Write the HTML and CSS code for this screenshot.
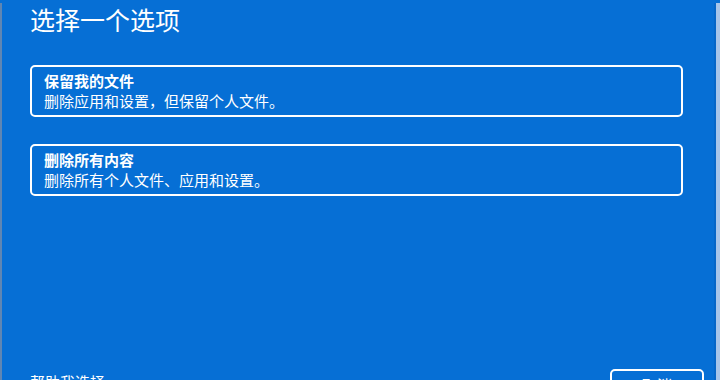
FILE: index.html
```html
<!DOCTYPE html>
<html lang="zh-CN">
<head>
  <meta charset="UTF-8">
  <meta name="viewport" content="width=device-width, initial-scale=1.0">
  <title>选择一个选项</title>
  <link rel="stylesheet" href="styles.css">
</head>
<body>
  <div class="screen">
    <div class="content">
      <h1 class="title">选择一个选项</h1>

      <div class="options">
        <button class="option">
          <span class="option-name">保留我的文件</span>
          <span class="option-desc">删除应用和设置，但保留个人文件。</span>
        </button>
        <button class="option">
          <span class="option-name">删除所有内容</span>
          <span class="option-desc">删除所有个人文件、应用和设置。</span>
        </button>
      </div>
    </div>

    <div class="footer">
      <a href="#" class="help">帮助我选择</a>
      <button class="cancel">取消</button>
    </div>
  </div>
</body>
</html>
```

FILE: styles.css
```css
html, body {
  margin: 0;
  height: 100%;
}
body {
  background-color: #066fd5;
  color: #fff;
  font-family: "Noto Sans CJK SC", "Noto Sans", sans-serif;
  overflow: hidden;
}
.screen {
  box-sizing: border-box;
  height: 100%;
  padding-left: 28px;
  border-left: 2px solid #5f86b3;
  border-right: 4px solid #a7c5ea;
  box-shadow: inset -2px 0 0 #0566c8;
}
.content {
  padding-right: 33px;
}
.title {
  margin: 3px 0 0;
  font-size: 25px;
  line-height: 32px;
  font-weight: 400;
}
.options {
  display: flex;
  flex-direction: column;
  gap: 27px;
  margin-top: 30px;
}
.option {
  display: flex;
  flex-direction: column;
  align-items: flex-start;
  box-sizing: border-box;
  height: 52px;
  padding: 4px 12px;
  background: transparent;
  border: 2px solid #fff;
  border-radius: 5px;
  color: #fff;
  font-family: inherit;
  font-size: 15px;
  line-height: 20px;
  text-align: left;
  cursor: pointer;
}
.option-name {
  font-weight: 700;
}
.footer {
  display: flex;
  justify-content: space-between;
  align-items: flex-start;
  margin-top: 173px;
  padding-right: 12px;
}
.help {
  margin-top: 3px;
  color: #fff;
  font-size: 15px;
  line-height: 20px;
  text-decoration: none;
}
.cancel {
  width: 94px;
  height: 32px;
  background: transparent;
  border: 2px solid #fff;
  border-radius: 5px;
  color: #fff;
  font-family: inherit;
  font-size: 15px;
  line-height: 20px;
}
```
